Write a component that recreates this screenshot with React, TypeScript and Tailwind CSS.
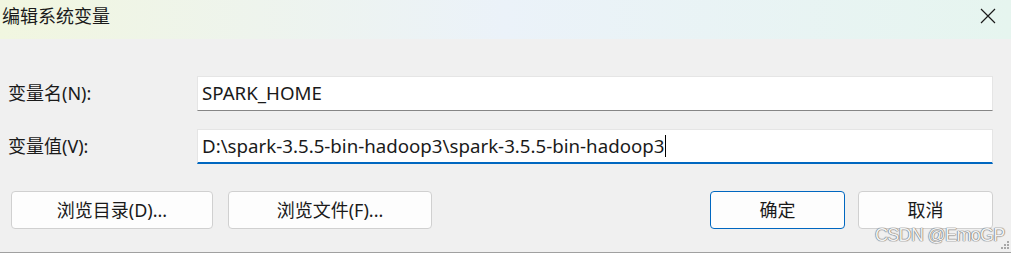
const font = "font-['Microsoft_YaHei_UI','Noto_Sans','Noto_Sans_CJK_SC',sans-serif]";

function Field({ label, value, focused }: { label: string; value: string; focused?: boolean }) {
  return (
    <>
      <div className="flex items-center pl-[8px] text-[18px] text-[#1a1a1a]">{label}</div>
      <div
        className={
          "flex items-center h-[35px] bg-white border border-[#e5e5e5] pl-[4px] text-[18.7px] text-[#1a1a1a] " +
          (focused ? "border-b-2 border-b-[#0067c0]" : "border-b border-b-[#868686]")
        }
      >
        <span>{value}</span>
        {focused && <span className="w-px h-[22px] bg-black ml-px" />}
      </div>
    </>
  );
}

function Btn({ children, w, primary }: { children: string; w: string; primary?: boolean }) {
  return (
    <button
      className={
        "h-[38px] rounded-[4px] bg-[#fdfdfd] text-[18px] text-[#1a1a1a] flex items-center justify-center border " +
        w +
        (primary ? " border-[#0067c0]" : " border-[#d0d0d0]")
      }
    >
      {children}
    </button>
  );
}

export default function App() {
  return (
    <div className={"relative w-[1011px] h-[253px] overflow-hidden bg-[#f0f0f0] border-b border-[#a0a0a0] flex flex-col " + font}>
      <div className="h-[39px] shrink-0 flex items-center justify-between bg-gradient-to-r from-[#f1f6e0] via-[#ebf2f9] to-[#e6f5ef]">
        <span className="pl-[2px] text-[18px] text-[#1a1a1a] -mt-[6px]">编辑系统变量</span>
        <svg width="16" height="16" viewBox="0 0 16 16" className="mr-[15px] -mt-[8px]">
          <path d="M1 1L15 15M15 1L1 15" stroke="#1a1a1a" strokeWidth="1.2" />
        </svg>
      </div>

      <div className="grid grid-cols-[197px_796px] gap-y-[18px] mt-[37px]">
        <Field label="变量名(N):" value="SPARK_HOME" />
        <Field label="变量值(V):" value="D:\spark-3.5.5-bin-hadoop3\spark-3.5.5-bin-hadoop3" focused />
      </div>

      <div className="flex items-center mt-[27px] pl-[11px] pr-[18px]">
        <div className="flex gap-[15px]">
          <Btn w="w-[202px]">浏览目录(D)...</Btn>
          <Btn w="w-[204px]">浏览文件(F)...</Btn>
        </div>
        <div className="flex gap-[13px] ml-auto">
          <Btn w="w-[135px]" primary>确定</Btn>
          <Btn w="w-[135px]">取消</Btn>
        </div>
      </div>

      <span className="absolute left-[875px] top-[225px] whitespace-nowrap text-[18px] leading-[20px] tracking-[-0.7px] text-[#f2f2f2] [text-shadow:0_0_1px_#707070,0_0_1px_#707070,0_0_1px_#707070] font-['Liberation_Sans',sans-serif]">
        CSDN @EmoGP
      </span>
      <svg width="10" height="10" viewBox="0 0 10 10" className="absolute right-[1px] bottom-[2px]">
        <g fill="#a8a8a8">
          <rect x="7" y="1" width="2" height="2" />
          <rect x="4" y="4" width="2" height="2" />
          <rect x="7" y="4" width="2" height="2" />
          <rect x="1" y="7" width="2" height="2" />
          <rect x="4" y="7" width="2" height="2" />
          <rect x="7" y="7" width="2" height="2" />
        </g>
      </svg>
    </div>
  );
}
